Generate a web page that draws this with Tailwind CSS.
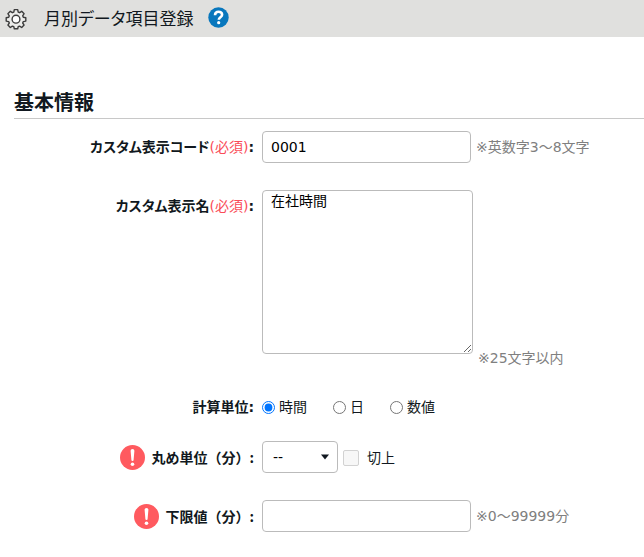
<!DOCTYPE html>
<html lang="ja">
<head>
<meta charset="utf-8">
<meta name="viewport" content="width=device-width, initial-scale=1">
<title>月別データ項目登録</title>
<script src="https://cdn.jsdelivr.net/npm/@tailwindcss/browser@4"></script>
</head>
<body class="bg-white text-[#111820] text-[14px] leading-5 font-['DejaVu_Sans','Noto_Sans_CJK_JP',sans-serif]">
<header class="flex h-[37px] items-center bg-[#e0e0de] pl-[5px]">
  <svg class="size-[22px] shrink-0" viewBox="0 0 22 22" fill="none" stroke="#3c3c3c" stroke-width="1.400" stroke-linejoin="round" aria-hidden="true">
    <path fill="#ececea" d="M9.300 1.600h3.400l.5 2.500 1.400.6 2.100-1.400 2.400 2.400-1.400 2.100.6 1.400 2.500.5v3.400l-2.500.5-.6 1.400 1.400 2.100-2.400 2.400-2.100-1.400-1.400.6-.5 2.100H9.300l-.5-2.100-1.400-.6-2.100 1.400-2.400-2.400 1.400-2.100-.6-1.400-2.500-.5V9.700l2.500-.5.6-1.400-1.400-2.100 2.400-2.400 2.100 1.400 1.400-.6z"/>
    <circle cx="11" cy="11.200" r="3.900" fill="#fff"/>
  </svg>
  <h1 class="ml-[17px] text-[17px] leading-6 [font-feature-settings:'palt']">月別データ項目登録</h1>
  <button type="button" aria-label="ヘルプ" class="ml-[14px] mb-[2px]">
    <svg class="block size-[21px]" viewBox="0 0 21 21" aria-hidden="true">
      <circle cx="10.500" cy="10.500" r="10.200" fill="#0877bd"/>
      <path d="M7 8.200C7.100 5.900 8.500 4.800 10.600 4.800c2.100 0 3.500 1.100 3.500 2.900 0 2.500-3.300 2.600-3.300 5" fill="none" stroke="#fff" stroke-width="2.600"/>
      <circle cx="10.700" cy="15.700" r="1.600" fill="#fff"/>
    </svg>
  </button>
</header>

<main class="pt-[52px] pl-[14px]">
  <h2 class="border-b border-[#c8c8c8] pb-px text-[20px] leading-7 font-bold">基本情報</h2>
  <form class="grid grid-cols-[240px_1fr] gap-x-2 pt-3">
    <div class="flex h-8 items-center justify-end font-bold [font-feature-settings:'palt']">
      <label for="code">カスタム表示コード<span class="font-normal text-[#fa4b58]">(必須)</span>:</label>
    </div>
    <div class="flex h-[59px] items-start gap-[5px]">
      <input id="code" type="text" value="0001" class="h-8 w-[209px] rounded border border-[#bbb] bg-white px-2 text-black">
      <span class="pt-[6px] text-[#808080]">※英数字3～8文字</span>
    </div>

    <div class="flex h-8 items-center justify-end font-bold [font-feature-settings:'palt']">
      <label for="name">カスタム表示名<span class="font-normal text-[#fa4b58]">(必須)</span>:</label>
    </div>
    <div class="flex items-end gap-[5px] pb-[14px]">
      <textarea id="name" class="mb-[14px] h-[164px] w-[211px] resize rounded border border-[#bbb] bg-white px-2 text-black">在社時間</textarea>
      <span class="text-[#808080]">※25文字以内</span>
    </div>

    <div id="unit-label" class="flex h-[50px] items-center justify-end font-bold">計算単位:</div>
    <div role="radiogroup" aria-labelledby="unit-label" class="flex h-[59px] items-start gap-[26px] pt-[15px]">
      <label class="flex items-center gap-1"><input type="radio" name="unit" checked class="size-[13px]">時間</label>
      <label class="flex items-center gap-1"><input type="radio" name="unit" class="size-[13px]">日</label>
      <label class="flex items-center gap-1"><input type="radio" name="unit" class="size-[13px]">数値</label>
    </div>

    <div class="flex h-8 items-center justify-end gap-[6px] font-bold">
      <svg class="size-[25px]" viewBox="0 0 25 25" aria-hidden="true">
        <circle cx="12.500" cy="12.500" r="12.500" fill="#ff5a5f"/>
        <path d="M10.600 5.800a1.900 1.900 0 0 1 3.800 0l-.8 9.200a1.100 1.100 0 0 1-2.200 0z" fill="#fff"/>
        <circle cx="12.500" cy="19.300" r="1.800" fill="#fff"/>
      </svg>
      <label for="round" class="font-['Noto_Sans_CJK_JP',sans-serif]">丸め単位（分）:</label>
    </div>
    <div class="flex h-[59px] items-start">
      <div class="relative">
        <select id="round" class="h-8 w-[76px] appearance-none rounded border border-[#bbb] bg-white pl-[10px] text-black"><option>--</option></select>
        <svg class="pointer-events-none absolute top-[13px] right-2 h-[6px] w-[10px]" viewBox="0 0 10 6" aria-hidden="true"><path d="M1 .5h8L5 5.500z" fill="#111820"/></svg>
      </div>
      <label class="ml-[5px] flex h-8 items-center gap-2 pt-[2px]"><input type="checkbox" disabled class="size-4 appearance-none rounded-xs border border-[#d2d2d2] bg-[#f7f7f7]">切上</label>
    </div>

    <div class="flex h-8 items-center justify-end gap-[6px] font-bold">
      <svg class="size-[25px]" viewBox="0 0 25 25" aria-hidden="true">
        <circle cx="12.500" cy="12.500" r="12.500" fill="#ff5a5f"/>
        <path d="M10.600 5.800a1.900 1.900 0 0 1 3.800 0l-.8 9.200a1.100 1.100 0 0 1-2.200 0z" fill="#fff"/>
        <circle cx="12.500" cy="19.300" r="1.800" fill="#fff"/>
      </svg>
      <label for="lower" class="font-['Noto_Sans_CJK_JP',sans-serif]">下限値（分）:</label>
    </div>
    <div class="flex items-start gap-[5px]">
      <input id="lower" type="text" class="h-8 w-[209px] rounded border border-[#bbb] bg-white px-2 text-black">
      <span class="pt-[6px] text-[#808080]">※0～99999分</span>
    </div>
  </form>
</main>
</body>
</html>
